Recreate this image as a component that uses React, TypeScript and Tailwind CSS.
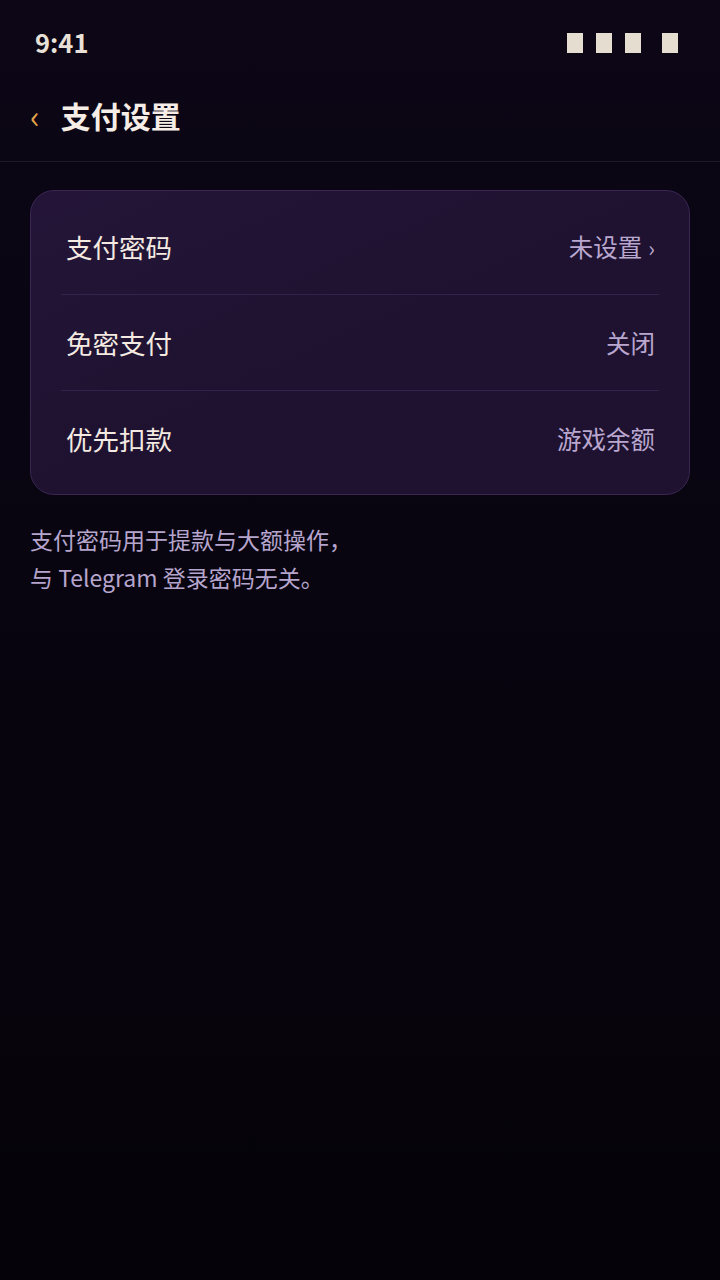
import React from 'react';

const font = { fontFamily: '"Noto Sans CJK SC", "Noto Sans", sans-serif' };

const rows = [
  { label: '支付密码', value: '未设置', arrow: true },
  { label: '免密支付', value: '关闭', arrow: false },
  { label: '优先扣款', value: '游戏余额', arrow: false },
];

const StatusBar: React.FC = () => (
  <div className="h-[86px] flex items-center justify-between pl-[35px] pr-[42px]">
    <span className="text-[25.5px] font-bold text-[#e9e1d8] leading-none -mt-[3px]">9:41</span>
    <div className="flex items-center">
      <div className="w-4 h-5 bg-[#e6ddd1]" />
      <div className="w-4 h-5 bg-[#e6ddd1] ml-[13px]" />
      <div className="w-4 h-5 bg-[#e6ddd1] ml-[13px]" />
      <div className="w-4 h-5 bg-[#e6ddd1] ml-[21px]" />
    </div>
  </div>
);

export default function App() {
  return (
    <div
      className="min-h-[1280px] w-full bg-gradient-to-b from-[#0c0616] to-[#050309] text-white"
      style={font}
    >
      <StatusBar />

      {/* header */}
      <div className="h-[76px] pb-[17px] flex items-center border-b border-[#1f1828] pl-[30px]">
        <span className="text-[32px] leading-none text-[#e3a24a] mr-[21px]">‹</span>
        <h1 className="text-[30px] font-bold text-[#f5ede6] leading-none">支付设置</h1>
      </div>

      <div className="px-[30px] pt-[28px]">
        <div className="rounded-[24px] border border-[#3a2652] bg-gradient-to-br from-[#241538] via-[#1e1230] to-[#1f1230] py-2">
          {rows.map((row, i) => (
            <div
              key={row.label}
              className={`mx-[30px] flex items-center justify-between pt-[1px] ${i === 0 ? 'h-[95px]' : 'h-[96px] border-t border-[#33224a]'}`}
            >
              <span className="pl-[5px] text-[26.5px] text-[#f4eae1]">{row.label}</span>
              <span className="pr-[4px] flex items-center text-[24.5px] text-[#b9a7cf]">
                {row.value}
                {row.arrow && <span className="ml-[6px] text-[22px] text-[#b9a7cf]">›</span>}
              </span>
            </div>
          ))}
        </div>

        <p className="mt-[25px] text-[23px] leading-[38px] text-[#b6a5cd]">
          支付密码用于提款与大额操作，
          <br />
          与 Telegram 登录密码无关。
        </p>
      </div>
    </div>
  );
}
